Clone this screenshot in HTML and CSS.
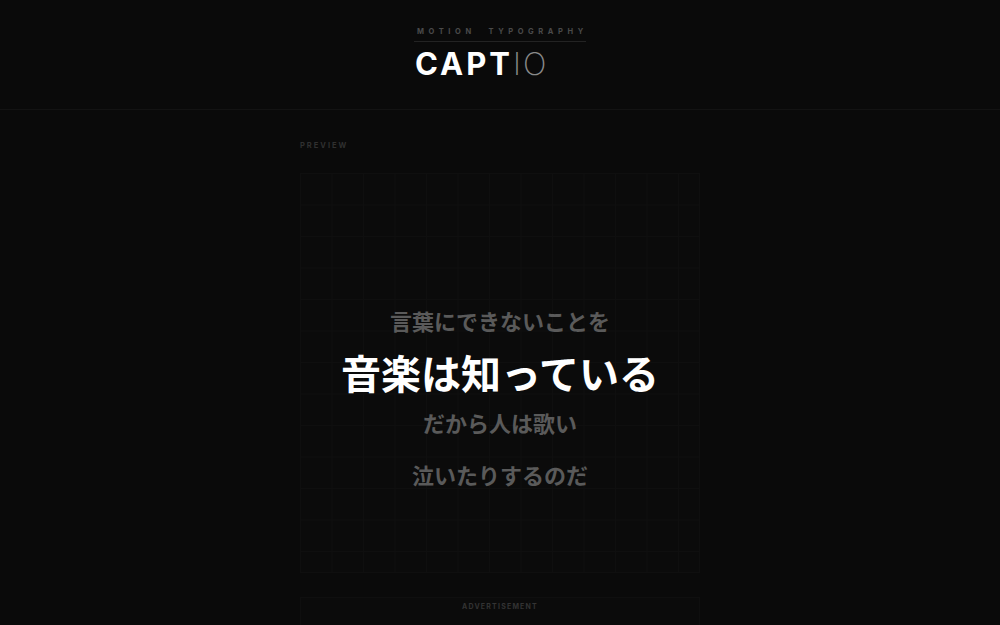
FILE: index.html
```html
<!DOCTYPE html>
<html lang="ja">
<head>
<meta charset="utf-8">
<title>CAPTIO</title>
<link rel="stylesheet" href="styles.css">
</head>
<body>
<header class="site-header">
  <div class="brand">
    <div class="tagline">MOTION&nbsp;&nbsp;TYPOGRAPHY</div>
    <div class="logo"><span class="logo-strong">CAPT</span><span class="logo-thin">IO</span></div>
  </div>
</header>
<main class="main">
  <div class="section-label">PREVIEW</div>
  <div class="preview">
    <div class="lyrics">
      <p class="line dim">言葉にできないことを</p>
      <p class="line active">音楽は知っている</p>
      <p class="line dim">だから人は歌い</p>
      <p class="line dim">泣いたりするのだ</p>
    </div>
  </div>
  <div class="ad">
    <div class="ad-label">ADVERTISEMENT</div>
  </div>
</main>
</body>
</html>
```
FILE: styles.css
```css
* { box-sizing: border-box; }
html, body { margin: 0; padding: 0; }
body {
  background: #0a0a0a;
  color: #fff;
  font-family: Inter, "Liberation Sans", "Noto Sans CJK JP", sans-serif;
  height: 625px;
  overflow: hidden;
}
.site-header {
  height: 110px;
  border-bottom: 1px solid #131313;
  display: flex;
  justify-content: center;
  padding-top: 27px;
}
.brand {
  display: flex;
  flex-direction: column;
  align-items: flex-start;
}
.tagline {
  font-size: 7.5px;
  font-weight: 700;
  letter-spacing: 4.6px;
  color: #4a4a4a;
  padding: 0 0 5px 3px;
  border-bottom: 1px solid #232323;
  width: 172px;
  white-space: nowrap;
  line-height: 9px;
}
.logo {
  margin-top: 5px;
  font-size: 31px;
  line-height: 34px;
  letter-spacing: 3px;
  margin-left: 1px;
}
.logo-strong { font-weight: 700; color: #fff; }
.logo-thin { font-weight: 200; color: #8a8a8a; letter-spacing: 2px; }
.main {
  width: 400px;
  margin: 0 auto;
  padding-top: 31px;
}
.section-label {
  font-size: 7.5px;
  font-weight: 700;
  letter-spacing: 2px;
  color: #303030;
  line-height: 10px;
  margin-bottom: 22px;
}
.preview {
  height: 400px;
  background-color: #0b0b0b;
  background-image:
    linear-gradient(to right, #0f0f0f 1px, transparent 1px),
    linear-gradient(to bottom, #0f0f0f 1px, transparent 1px);
  background-size: 31.5px 31.5px;
  background-position: -1px -1px;
  border: 1px solid #0f0f0f;
  display: flex;
  align-items: center;
  justify-content: center;
  padding-top: 48px;
}
.lyrics {
  display: flex;
  flex-direction: column;
  align-items: center;
  font-family: "Noto Sans CJK JP", sans-serif;
  font-weight: 700;
}
.line { margin: 0; white-space: nowrap; }
.dim {
  font-size: 22px;
  color: #5a5a5a;
  line-height: 30px;
}
.active {
  font-size: 40px;
  color: #fff;
  line-height: 54px;
  margin: 10px 0 8px;
}
.line.dim:last-child { margin-top: 22px; }
.ad {
  margin-top: 24px;
  height: 28px;
  background: #0b0b0b;
  border: 1px solid #0f0f0f;
  border-bottom: none;
  padding-top: 4px;
}
.ad-label {
  text-align: center;
  font-size: 7px;
  font-weight: 700;
  letter-spacing: 1.2px;
  color: #333;
  line-height: 10px;
}
```
